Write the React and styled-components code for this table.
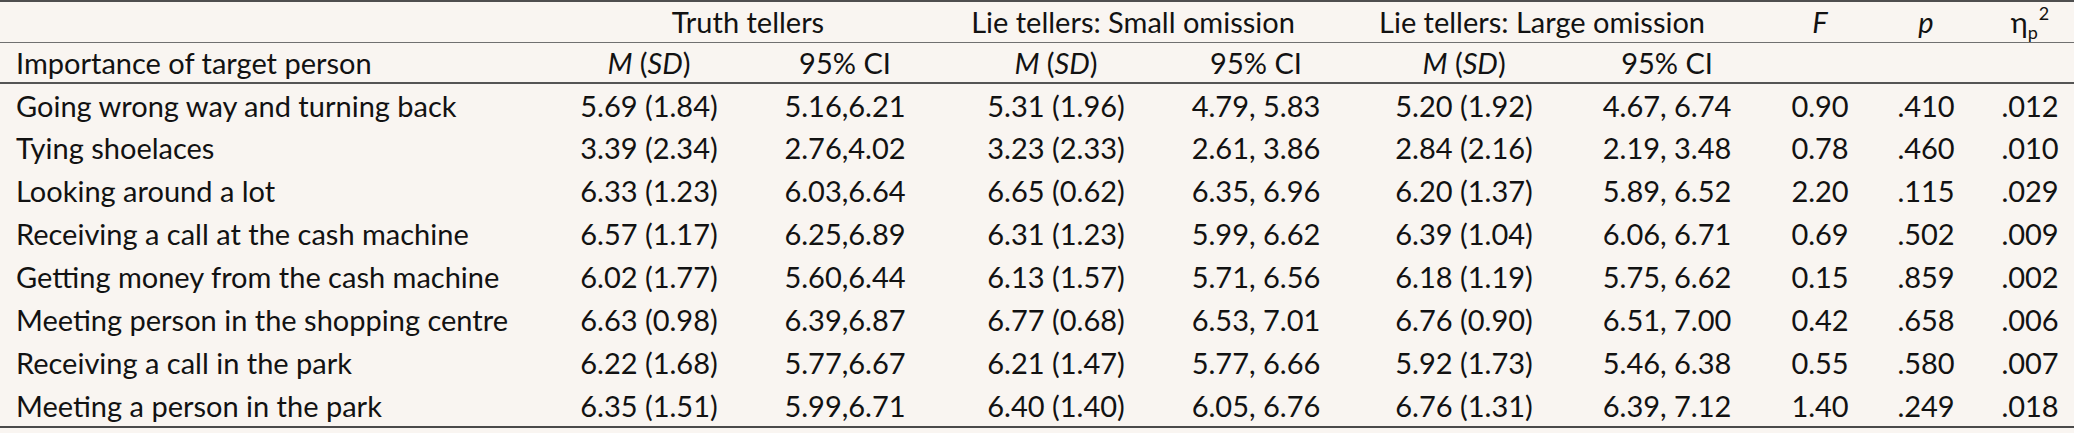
import React from 'react';
import styled, { createGlobalStyle } from 'styled-components';

const Global = createGlobalStyle`
  html, body { margin: 0; padding: 0; background: #f9f5f1; }
  body { font-family: Lato, 'Noto Sans', sans-serif; color: #121212; }
`;

// column widths, measured off the printed table
const widths = [552, 194, 198, 224, 176, 240, 166, 140, 72, 112];

const Table = styled.table`
  width: 2074px;
  table-layout: fixed;
  border-collapse: collapse;
  font-size: 29px;
  line-height: 1;
  border-top: 2px solid #4f4f4f;
  border-bottom: 2px solid #4a4a4a;
`;

const GroupRow = styled.tr`
  height: 41px;
  border-bottom: 1px solid #707070;
`;

const SubRow = styled.tr`
  height: 41px;
  border-bottom: 2px solid #555;
`;

const Row = styled.tr`
  height: 43px;
`;

const Cell = styled.td`
  padding: 0;
  padding-left: ${p => (p.$label ? '16px' : p.$last ? '24px' : '0')};
  text-align: ${p => (p.$label ? 'left' : 'center')};
  vertical-align: middle;
  white-space: nowrap;
  font-weight: 400;
`;

const Head = styled(Cell).attrs({ as: 'th' })`
  padding-right: ${p => p.$nudge || 0}px;
`;

const I = styled.i`
  font-style: italic;
`;

const Sub = styled.sub`
  font-size: 18px;
  vertical-align: -6px;
  line-height: 0;
`;

const Sup = styled.sup`
  font-size: 18px;
  vertical-align: 13px;
  line-height: 0;
  margin-left: 1px;
`;

const rows = [
  ['Going wrong way and turning back', '5.69 (1.84)', '5.16,6.21', '5.31 (1.96)', '4.79, 5.83', '5.20 (1.92)', '4.67, 6.74', '0.90', '.410', '.012'],
  ['Tying shoelaces', '3.39 (2.34)', '2.76,4.02', '3.23 (2.33)', '2.61, 3.86', '2.84 (2.16)', '2.19, 3.48', '0.78', '.460', '.010'],
  ['Looking around a lot', '6.33 (1.23)', '6.03,6.64', '6.65 (0.62)', '6.35, 6.96', '6.20 (1.37)', '5.89, 6.52', '2.20', '.115', '.029'],
  ['Receiving a call at the cash machine', '6.57 (1.17)', '6.25,6.89', '6.31 (1.23)', '5.99, 6.62', '6.39 (1.04)', '6.06, 6.71', '0.69', '.502', '.009'],
  ['Getting money from the cash machine', '6.02 (1.77)', '5.60,6.44', '6.13 (1.57)', '5.71, 6.56', '6.18 (1.19)', '5.75, 6.62', '0.15', '.859', '.002'],
  ['Meeting person in the shopping centre', '6.63 (0.98)', '6.39,6.87', '6.77 (0.68)', '6.53, 7.01', '6.76 (0.90)', '6.51, 7.00', '0.42', '.658', '.006'],
  ['Receiving a call in the park', '6.22 (1.68)', '5.77,6.67', '6.21 (1.47)', '5.77, 6.66', '5.92 (1.73)', '5.46, 6.38', '0.55', '.580', '.007'],
  ['Meeting a person in the park', '6.35 (1.51)', '5.99,6.71', '6.40 (1.40)', '6.05, 6.76', '6.76 (1.31)', '6.39, 7.12', '1.40', '.249', '.018'],
];

const MSD = () => (
  <>
    <I>M</I> (<I>SD</I>)
  </>
);

export default function App() {
  return (
    <>
      <Global />
      <Table>
        <colgroup>
          {widths.map((w, i) => (
            <col key={i} style={{ width: w }} />
          ))}
        </colgroup>
        <thead>
          <GroupRow>
            <Head $label />
            <Head colSpan={2}>Truth tellers</Head>
            <Head colSpan={2} $nudge={22}>Lie tellers: Small omission</Head>
            <Head colSpan={2} $nudge={10}>Lie tellers: Large omission</Head>
            <Head><I>F</I></Head>
            <Head><I>p</I></Head>
            <Head $last>η<Sub>p</Sub><Sup>2</Sup></Head>
          </GroupRow>
          <SubRow>
            <Head $label>Importance of target person</Head>
            <Head><MSD /></Head>
            <Head>95% CI</Head>
            <Head><MSD /></Head>
            <Head>95% CI</Head>
            <Head><MSD /></Head>
            <Head>95% CI</Head>
            <Head />
            <Head />
            <Head $last />
          </SubRow>
        </thead>
        <tbody>
          {rows.map(r => (
            <Row key={r[0]}>
              {r.map((v, i) => (
                <Cell key={i} $label={i === 0} $last={i === r.length - 1}>{v}</Cell>
              ))}
            </Row>
          ))}
        </tbody>
      </Table>
    </>
  );
}
